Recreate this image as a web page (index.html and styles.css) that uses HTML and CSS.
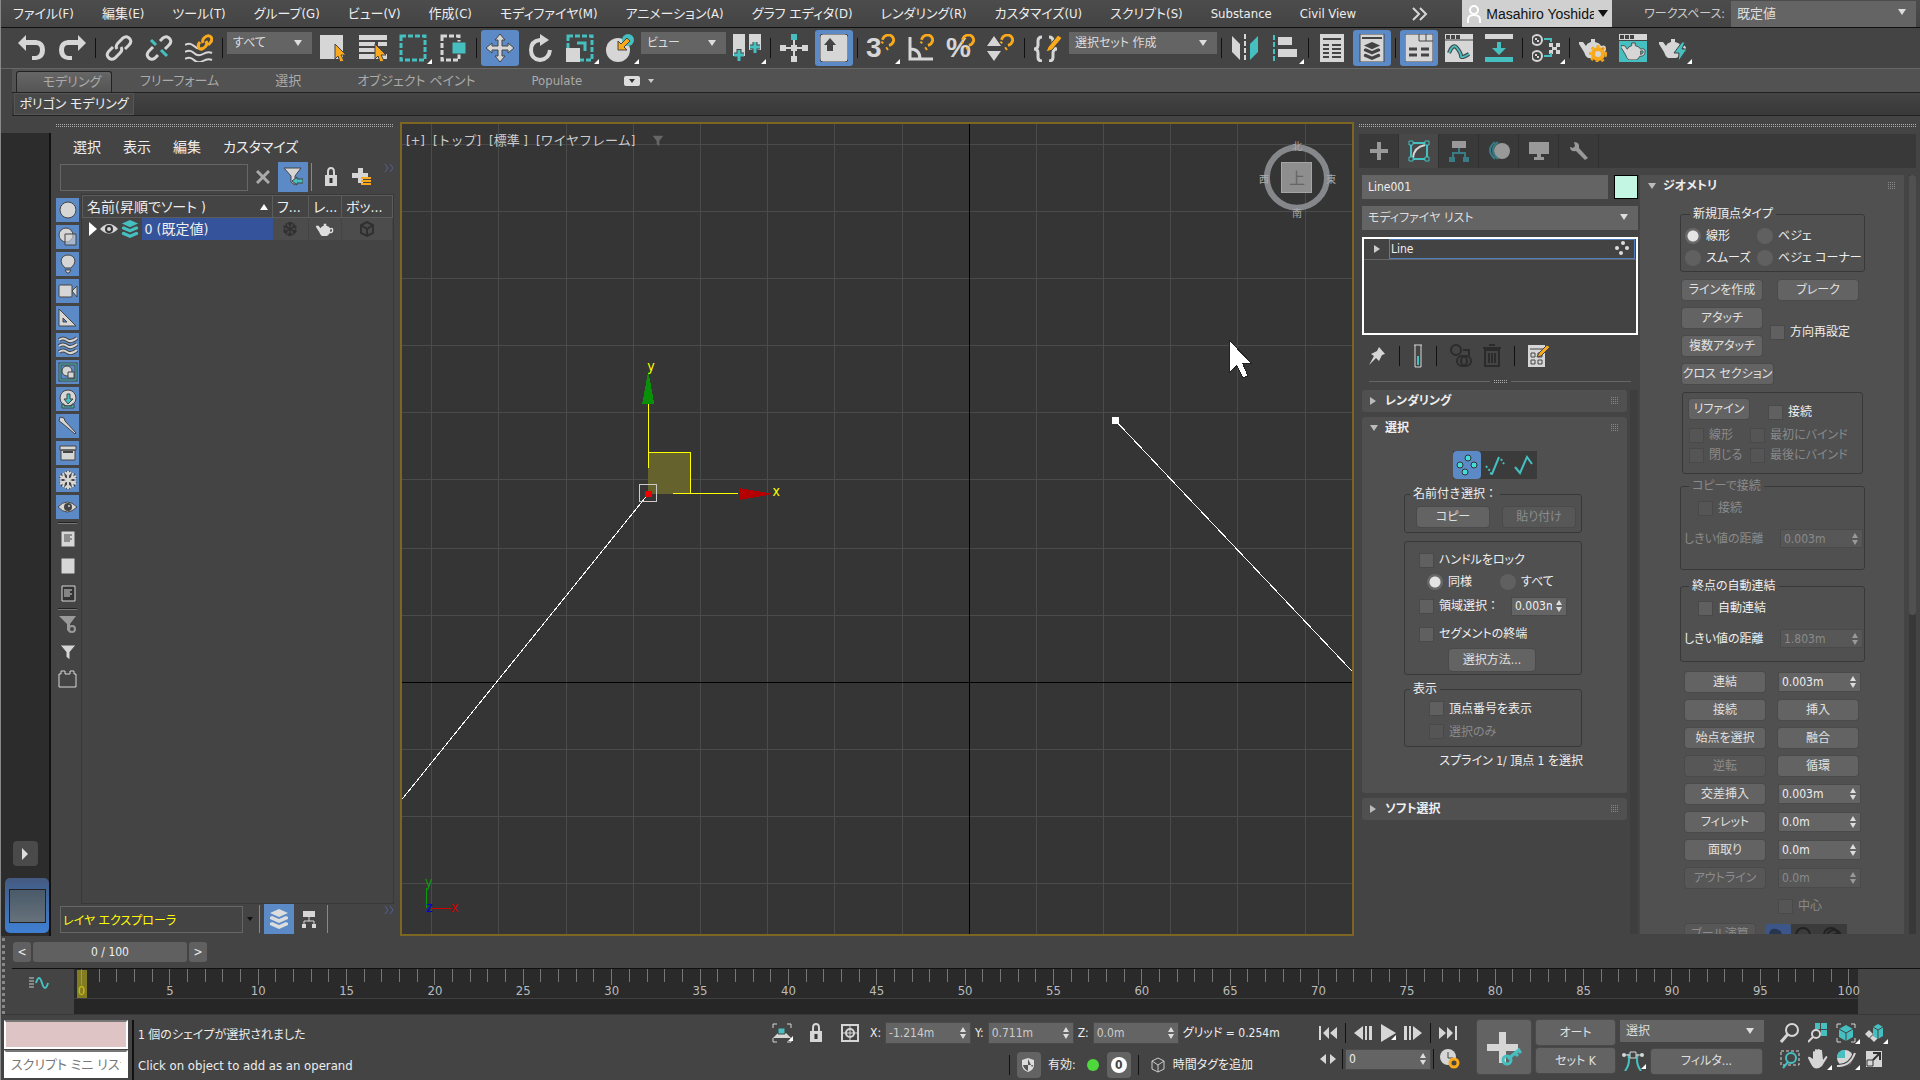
FILE: index.html
```html
<!DOCTYPE html>
<html lang="ja">
<head>
	<meta charset="utf-8">
	<title>3ds Max</title>
	<link rel="stylesheet" href="styles.css">
</head>
<body>

	<svg class="defs" width="0" height="0">
		<symbol id="teapot" viewBox="0 0 28 20">
			<path d="M12 1h4v3q5 1 6 4 5-2 5 3t-6 5q-1 3-4 4h-8Q6 18 5 14L0 6V4h4l3 4q1-3 5-4zM22 10v4q3-1 3-3t-3-1z"/>
		</symbol>
		<symbol id="stack" viewBox="0 0 20 20">
			<path d="M10 0l9 4-9 4-9-4zM1 8l2-1 7 3 7-3 2 1v2l-9 4-9-4zM1 14l2-1 7 3 7-3 2 1v2l-9 4-9-4z"/>
		</symbol>
		<symbol id="flake" viewBox="0 0 20 20">
			<path d="M10 1v18M2 6l16 8M2 14l16-8M7 2l3 3 3-3M7 18l3-3 3 3M2 9l4-2-1-4M18 9l-4-2 1-4M2 11l4 2-1 4M18 11l-4 2 1 4" fill="none"/>
		</symbol>
		<symbol id="cube" viewBox="0 0 16 16">
			<path d="M8 1l6 3v8l-6 3-6-3V4zM2 4l6 4 6-4M8 8v7" fill="none"/>
		</symbol>
		<symbol id="magnet" viewBox="0 0 16 18">
			<path d="M2 6q2-5 7-5 5 1 5 6-1 4-5 5" fill="none" stroke="#f9a91a" stroke-width="3"/>
			<path d="M6 14l2 3M1 8l2 2" stroke="#f9a91a" stroke-width="2"/>
		</symbol>
		<symbol id="spin" viewBox="0 0 8 14">
			<path d="M4 1l3 5H1zM4 13l3-5H1z"/>
		</symbol>
		<symbol id="grip" viewBox="0 0 8 8">
			<path d="M0 .5h8M0 2.500h8M0 4.500h8M0 6.500h8" stroke="#888" stroke-dasharray="1 1"/>
		</symbol>
		<symbol id="funnel" viewBox="0 0 18 18">
			<path d="M1 1h16l-6 8v8l-4-3V9z"/>
		</symbol>
		<symbol id="link" viewBox="0 0 28 28">
			<g fill="none" stroke="#d6d6d6" stroke-width="3">
				<path d="M12 15q-2-3 1-6l5-5q4-3 7 1 2 3-1 6l-4 4"/>
				<path d="M16 13q2 3-1 6l-5 5q-4 3-7-1-2-3 1-6l4-4"/>
			</g>
		</symbol>
	</svg>

	<nav class="menubar">
		<a href="#">ファイル(F)</a>
		<a href="#">編集(E)</a>
		<a href="#">ツール(T)</a>
		<a href="#">グループ(G)</a>
		<a href="#">ビュー(V)</a>
		<a href="#">作成(C)</a>
		<a href="#">モディファイヤ(M)</a>
		<a href="#">アニメーション(A)</a>
		<a href="#">グラフ エディタ(D)</a>
		<a href="#">レンダリング(R)</a>
		<a href="#">カスタマイズ(U)</a>
		<a href="#">スクリプト(S)</a>
		<a href="#">Substance</a>
		<a href="#">Civil View</a>
		<button type="button" class="more" aria-label="more"><svg width="16" height="14" viewBox="0 0 16 14"><path d="M1 1l6 6-6 6M8 1l6 6-6 6" fill="none" stroke="#d6d6d6" stroke-width="2"/></svg></button>
		<button type="button" class="user">
			<svg width="16" height="18" viewBox="0 0 16 18"><g fill="none" stroke="#fff" stroke-width="2"><circle cx="8" cy="5" r="4"/><path d="M2 18v-3q0-5 6-5t6 5v3"/></g></svg>
			<span class="name">Masahiro Yoshida</span>
			<span class="tri"></span>
		</button>
		<label for="workspace">ワークスペース:</label>
		<span class="drop"><select id="workspace"><option>既定値</option></select></span>
	</nav>

	<div class="toolbar">
		<button type="button" class="tool" aria-label="undo"><svg viewBox="0 0 28 28"><path d="M0 9l8-8v5h10q9 1 9 10t-9 10h-4v-4h4q4-1 4-6t-4-5H8v6z" fill="#d6d6d6"/></svg></button>
		<button type="button" class="tool" aria-label="redo"><svg viewBox="0 0 28 28"><path d="M28 9l-8-8v5H10Q1 7 1 16t9 10h4v-4h-4q-4-1-4-6t4-5h10v6z" fill="#d6d6d6"/></svg></button>
		<span class="sep"></span>
		<button type="button" class="tool" aria-label="link"><svg><use href="#link"/></svg></button>
		<button type="button" class="tool" aria-label="unlink"><svg viewBox="0 0 28 28"><g fill="none" stroke="#d6d6d6" stroke-width="3"><path d="M15 7l3-3q4-3 7 1 2 3-1 6l-4 4M13 21l-3 3q-4 3-7-1-2-3 1-6l4-4"/></g><path d="M6 6l5 5M16 16l6 6" stroke="#45bfc0" stroke-width="3"/></svg></button>
		<button type="button" class="tool" aria-label="bind"><svg viewBox="0 0 28 28"><path d="M0 11q5-3 9 1t9 2M0 18q5-3 9 1t9 1 9-1M0 25q5-3 9 1t9 1 9-1" fill="none" stroke="#d6d6d6" stroke-width="2"/><g fill="none" stroke="#f9a91a" stroke-width="3"><path d="M18 9q-1-3 1-5 4-4 7-1 2 3-1 6l-2 2"/><path d="M21 7q2 3-1 6-4 4-6 1-2-3 1-6"/></g></svg></button>
		<span class="sep"></span>
		<span class="drop w85"><select aria-label="filter"><option>すべて</option></select></span>
		<button type="button" class="tool" aria-label="select object"><svg viewBox="0 0 28 28"><path d="M1 1h23v24H1z" fill="#d6d6d6"/><path d="M16 10l11 11h-5l3 6-4 1-2-6-3 3z" fill="#f9a91a" stroke="#444"/></svg></button>
		<button type="button" class="tool" aria-label="select by name"><svg viewBox="0 0 28 28"><path d="M0 1h28v5H0zM0 8h16v4H0zM0 14h16v4H0zM0 20h28v5H0zM19 8h9v4h-9z" fill="#d6d6d6"/><path d="M16 10l11 11h-5l3 6-4 1-2-6-3 3z" fill="#f9a91a" stroke="#444"/></svg></button>
		<button type="button" class="tool fly" aria-label="region"><svg viewBox="0 0 28 28"><path d="M2 2h24v24H2z" fill="none" stroke="#45bfc0" stroke-width="3" stroke-dasharray="5 2"/></svg></button>
		<button type="button" class="tool" aria-label="crossing"><svg viewBox="0 0 28 28"><path d="M3 2h17v24H3z" fill="none" stroke="#d6d6d6" stroke-width="3" stroke-dasharray="5 2"/><path d="M13 8h14v12H13z" fill="#45bfc0" stroke="#444"/></svg></button>
		<span class="sep"></span>
		<button type="button" class="tool on" aria-label="move"><svg viewBox="0 0 28 28"><path d="M14 0l5 6h-3v6h6V9l6 5-6 5v-3h-6v6h3l-5 6-5-6h3v-6H6v3l-6-5 6-5v3h6V6H9z" fill="#d6d6d6" stroke="#444"/></svg></button>
		<button type="button" class="tool" aria-label="rotate"><svg viewBox="0 0 28 28"><path d="M16 6H14q-9 1-9 10t9 10q9-1 10-10" fill="none" stroke="#d6d6d6" stroke-width="4"/><path d="M14 0l9 6-9 6z" fill="#d6d6d6"/></svg></button>
		<button type="button" class="tool fly" aria-label="scale"><svg viewBox="0 0 28 28"><path d="M2 2h24v24H2z" fill="none" stroke="#45bfc0" stroke-width="3" stroke-dasharray="5 2"/><path d="M0 14h14v14H0z" fill="#d6d6d6"/><path d="M11 9h8v8" fill="none" stroke="#45bfc0" stroke-width="3"/></svg></button>
		<button type="button" class="tool fly" aria-label="place"><svg viewBox="0 0 28 28"><circle cx="12" cy="16" r="12" fill="#d6d6d6"/><circle cx="22" cy="6" r="6" fill="#45bfc0"/><path d="M21 4l3 3-6 6 3 3h-9V7l3 3z" fill="#f9a91a" stroke="#444"/></svg></button>
		<span class="drop w85"><select aria-label="coordinate system"><option>ビュー</option></select></span>
		<button type="button" class="tool fly" aria-label="pivot"><svg viewBox="0 0 28 28"><path d="M0 0h12v22H0zM16 0h12v16H16z" fill="#d6d6d6"/><path d="M6 15v12M1 21h10M22 8v11M17 13h10" stroke="#444" stroke-width="5"/><path d="M6 16v11M1 21h10M22 8v11M17 13h10" stroke="#45bfc0" stroke-width="3"/></svg></button>
		<span class="sep"></span>
		<button type="button" class="tool" aria-label="manipulate"><svg viewBox="0 0 28 28"><path d="M14 6v16M4 14h20" stroke="#d6d6d6" stroke-width="2"/><path d="M11 0h6v6h-6z" fill="#45bfc0"/><path d="M11 22h6v6h-6zM0 11h6v6H0zM22 11h6v6h-6zM11 11h6v6h-6z" fill="#d6d6d6"/></svg></button>
		<button type="button" class="tool on" aria-label="keyboard override"><svg viewBox="0 0 28 28"><rect width="28" height="28" rx="3" fill="#d6d6d6" stroke="#444"/><path d="M10 4l6 7h-3v6H7v-6H4z" fill="#444"/></svg></button>
		<span class="sep"></span>
		<button type="button" class="tool fly big" aria-label="snap">3<svg class="mag"><use href="#magnet"/></svg></button>
		<button type="button" class="tool" aria-label="angle snap"><svg viewBox="0 0 28 28"><path d="M3 3v22h23M3 15q10 0 10 10" fill="none" stroke="#d6d6d6" stroke-width="3"/><use href="#magnet" x="12" y="0" width="16" height="17"/></svg></button>
		<button type="button" class="tool big" aria-label="percent snap">%<svg class="mag"><use href="#magnet"/></svg></button>
		<button type="button" class="tool" aria-label="spinner snap"><svg viewBox="0 0 28 28"><path d="M7 2l7 10H0zM7 27l7-10H0z" fill="#d6d6d6"/><use href="#magnet" x="12" y="0" width="16" height="17"/></svg></button>
		<span class="sep"></span>
		<button type="button" class="tool" aria-label="edit named sets"><svg viewBox="0 0 28 28"><path d="M8 3Q4 3 4 7v4q0 4-4 4 4 0 4 4v4q0 4 4 4M15 3q4 0 4 4v4q0 4 4 4-4 0-4 4v4q0 4-4 4" fill="none" stroke="#d6d6d6" stroke-width="3"/><path d="M12 18l2-5L24 1l4 3-10 12z" fill="#f9a91a" stroke="#444"/></svg></button>
		<span class="drop w148"><select aria-label="selection set"><option>選択セット 作成</option></select></span>
		<span class="sep"></span>
		<button type="button" class="tool" aria-label="mirror"><svg viewBox="0 0 28 28"><path d="M1 2l8 8v16l-8-8z" fill="#d6d6d6"/><path d="M27 2l-8 8v16l8-8z" fill="#45bfc0"/><path d="M14 0v28" stroke="#d6d6d6" stroke-width="2" stroke-dasharray="5 2"/></svg></button>
		<button type="button" class="tool fly" aria-label="align"><svg viewBox="0 0 28 28"><path d="M3 1v26" stroke="#45bfc0" stroke-width="2" stroke-dasharray="5 2"/><path d="M7 3h14v8H7zM7 15h19v8H7z" fill="#d6d6d6"/></svg></button>
		<span class="sep"></span>
		<button type="button" class="tool" aria-label="scene explorer"><svg viewBox="0 0 28 28"><path d="M2 0h24v28H2z" fill="#d6d6d6"/><path d="M5 5h18M5 11h6M14 11h9M5 15h6M14 15h9M5 19h6M14 19h9M5 23h6M14 23h9" stroke="#444" stroke-width="2"/></svg></button>
		<button type="button" class="tool on" aria-label="layer explorer"><svg viewBox="0 0 28 28"><path d="M2 0h24v28H2z" fill="#d6d6d6" stroke="#444"/><path d="M4 4h20" stroke="#444" stroke-width="2"/><use href="#stack" x="5" y="8" width="18" height="18" fill="#444"/></svg></button>
		<span class="sep"></span>
		<button type="button" class="tool on" aria-label="ribbon"><svg viewBox="0 0 28 28"><path d="M0 0h28v28H0z" fill="#d6d6d6" stroke="#444"/><path d="M14 0v7h14M21 0v7" fill="none" stroke="#444"/><path d="M4 15h8M16 15h8M4 21h8M16 21h8" stroke="#444" stroke-width="3"/></svg></button>
		<button type="button" class="tool" aria-label="curve editor"><svg viewBox="0 0 28 28"><path d="M0 0h28v28H0z" fill="#d6d6d6"/><path d="M1 3h4M6 3h4M11 3h4" stroke="#444" stroke-width="4"/><path d="M0 6h28" stroke="#444"/><path d="M4 19q4-10 8-5t4 8 8-2" fill="none" stroke="#444" stroke-width="4"/><path d="M4 19q4-10 8-5t4 8 8-2" fill="none" stroke="#45bfc0" stroke-width="2"/></svg></button>
		<button type="button" class="tool" aria-label="schematic"><svg viewBox="0 0 28 28"><path d="M0 0h28v5H0z" fill="#d6d6d6"/><path d="M0 23h28v5H0zM12 8h4v6h5l-7 7-7-7h5z" fill="#45bfc0"/></svg></button>
		<span class="sep"></span>
		<button type="button" class="tool fly" aria-label="material editor"><svg viewBox="0 0 28 28"><g fill="#444" stroke="#d6d6d6" stroke-width="2"><circle cx="5" cy="6" r="5"/><circle cx="5" cy="22" r="5"/></g><path d="M3 4h2v2h2v2H5V6H3zM3 20h2v2h2v2H5v-2H3zM17 9h4v4h3V9h4v4h-3v3h3v4h-4v-4h-3v4h-4v-4h3v-3h-3z" fill="#d6d6d6"/><path d="M12 5h7v3M12 22h7v-3" fill="none" stroke="#45bfc0" stroke-width="2"/></svg></button>
		<span class="sep"></span>
		<button type="button" class="tool" aria-label="render setup"><svg viewBox="0 0 28 28"><use href="#teapot" y="4" width="28" height="20" fill="#d6d6d6"/><circle cx="19" cy="20" r="5" fill="#d6d6d6" stroke="#f9a91a" stroke-width="4"/><circle cx="19" cy="20" r="8" fill="none" stroke="#f9a91a" stroke-width="2" stroke-dasharray="3 3"/></svg></button>
		<button type="button" class="tool" aria-label="rendered frame"><svg viewBox="0 0 28 28"><path d="M0 0h28v6H0z" fill="#d6d6d6"/><path d="M1 3h4M6 3h4M11 3h4" stroke="#444" stroke-width="4"/><path d="M0 7h28v21H0z" fill="#45bfc0"/><use href="#teapot" x="2" y="8" width="25" height="18" fill="#d6d6d6" stroke="#444"/></svg></button>
		<button type="button" class="tool fly" aria-label="render"><svg viewBox="0 0 28 28"><use href="#teapot" y="4" width="28" height="20" fill="#d6d6d6"/><path d="M23 8l-8 11h5l-1 9 9-13h-5l3-7z" fill="#45bfc0" stroke="#444"/></svg></button>
	</div>

	<div class="ribbon">
		<div class="tabs">
			<button type="button" class="current">モデリング</button>
			<button type="button">フリーフォーム</button>
			<button type="button">選択</button>
			<button type="button">オブジェクト ペイント</button>
			<button type="button">Populate</button>
			<button type="button" class="state" aria-label="minimize"><svg width="32" height="10" viewBox="0 0 32 10"><rect width="16" height="10" rx="2" fill="#ddd"/><path d="M5 3h6l-3 4z" fill="#333"/><path d="M24 3h6l-3 4z" fill="#ccc"/></svg></button>
		</div>
		<div class="sub"><button type="button">ポリゴン モデリング</button></div>
	</div>

	<main>
		<aside class="strip">
			<button type="button" class="play" aria-label="play"><svg width="8" height="12" viewBox="0 0 8 12"><path d="M1 0l6 6-6 6z" fill="#ddd"/></svg></button>
			<button type="button" class="layout" aria-label="layout"><span></span></button>
		</aside>

		<section class="explorer">
			<div class="handle"></div>
			<nav>
				<a href="#">選択</a>
				<a href="#">表示</a>
				<a href="#">編集</a>
				<a href="#">カスタマイズ</a>
			</nav>
			<div class="search">
				<input type="text" aria-label="search">
				<button type="button" class="clear" aria-label="clear"><svg width="14" height="14" viewBox="0 0 14 14"><path d="M1 1l12 12M13 1L1 13" stroke="#aaa" stroke-width="3"/></svg></button>
				<button type="button" class="sq on" aria-label="filter"><svg width="20" height="20" viewBox="0 0 20 20"><path d="M1 1h17l-6 8v9l-4-3V9z" fill="#d6d6d6" stroke="#444"/><path d="M9 14l5-4v2h6v4h-6v2z" fill="#45bfc0" stroke="#444"/></svg></button>
				<span class="bar"></span>
				<button type="button" class="sq" aria-label="lock"><svg width="14" height="20" viewBox="0 0 14 20"><path d="M4 9V5q0-4 3-4t3 4v4" fill="none" stroke="#d6d6d6" stroke-width="2"/><path d="M1 8h12v11H1z" fill="#d6d6d6"/><path d="M7 11v5" stroke="#333" stroke-width="3"/></svg></button>
				<button type="button" class="sq" aria-label="add layer"><svg width="20" height="20" viewBox="0 0 20 20"><path d="M7 1h5v5h5v5h-5v5H7v-5H1V6h6z" fill="#d6d6d6"/><path d="M10 11h10M10 14h10M10 17h10" stroke="#f9a91a" stroke-width="2"/></svg></button>
				<span class="chev"><svg width="10" height="8" viewBox="0 0 10 8"><path d="M1 0l3 4-3 4M6 0l3 4-3 4" fill="none" stroke="#55609c"/></svg></span>
			</div>
			<div class="scene">
				<div class="kinds">
					<button type="button" class="on" aria-label="geometry"><svg><circle cx="10" cy="10" r="8"/></svg></button>
					<button type="button" class="on" aria-label="shapes"><svg><circle cx="8" cy="8" r="7"/><path d="M7 7h11v11H7z" fill-opacity=".6"/></svg></button>
					<button type="button" class="on" aria-label="lights"><svg><path d="M7 14Q3 10 3 7q1-6 7-6t7 6q0 3-4 7zM7 16h6l-2 3H9z"/></svg></button>
					<button type="button" class="on" aria-label="cameras"><svg><rect y="4" x="1" width="13" height="12" rx="1"/><path d="M14 10l5-5v11z"/></svg></button>
					<button type="button" class="on" aria-label="helpers"><svg><path d="M1 1l17 17H1zM5 10v4h4z"/></svg></button>
					<button type="button" class="on" aria-label="space warps"><svg><path d="M1 5q4-3 8 0t10-2M1 11q4-3 8 0t10-2M1 17q4-3 8 0t10-2" fill="none" stroke="#444" stroke-width="4"/><path d="M1 5q4-3 8 0t10-2M1 11q4-3 8 0t10-2M1 17q4-3 8 0t10-2" fill="none" stroke="#d6d6d6" stroke-width="2"/></svg></button>
					<button type="button" class="on" aria-label="groups"><svg><path d="M2 2h16v16H2z" fill="#5b8ac6" stroke="#444" stroke-width="3"/><path d="M2 2h16v16H2z" fill="none" stroke="#45bfc0"/><circle cx="9" cy="9" r="5"/><path d="M10 10h6v6h-6z"/></svg></button>
					<button type="button" class="on" aria-label="references"><svg><circle cx="10" cy="9" r="8"/><path d="M9 5h3v5h3l-5 5-4-5h3zM4 15h2v2h8v-2h2v4H4z" fill="#45bfc0"/></svg></button>
					<button type="button" class="on" aria-label="bones"><svg><path d="M2 1l4 1 1 3 11 12-1 1L4 7 1 5z"/></svg></button>
					<button type="button" class="on" aria-label="containers"><svg><path d="M2 3h16v4H2zM3 7h14v10H3z"/><path d="M5 9h10" stroke-width="2"/></svg></button>
					<button type="button" class="on" aria-label="frozen"><svg><use href="#flake" stroke="#444" stroke-width="4"/><use href="#flake" stroke="#d6d6d6" stroke-width="2"/></svg></button>
					<button type="button" class="on" aria-label="hidden"><svg><path d="M0 10q9-10 19 0-10 10-19 0z"/><circle cx="10" cy="10" r="3" fill="#444" stroke-width="2"/><circle cx="11" cy="9" r="1" stroke="none"/></svg></button>
					<hr>
					<button type="button" aria-label="all"><svg><path d="M3 2h14v16H3z"/><path d="M6 6h8M6 8h6M6 10h8M6 12h6"/></svg></button>
					<button type="button" aria-label="none"><svg><path d="M3 2h14v16H3z"/></svg></button>
					<button type="button" aria-label="invert"><svg><path d="M4 3h13v15H4z" fill="#333" stroke="#d6d6d6"/><path d="M6 7h8M6 9h6M6 11h8M6 13h6" stroke="#d6d6d6"/></svg></button>
					<hr>
					<button type="button" aria-label="filter settings"><svg><path d="M1 1h17l-6 8v9l-3-3V9z" fill="#999" stroke="none"/><circle cx="14" cy="14" r="3" fill="#444" stroke="#999" stroke-width="2"/></svg></button>
					<button type="button" aria-label="display filter"><svg><path d="M2 3h16l-6 7v8l-4-3v-5z"/></svg></button>
					<button type="button" aria-label="custom filter"><svg><path d="M1 5h2V2h4v3h5V2h4v3h2v13H1z" fill="none" stroke="#d6d6d6"/></svg></button>
				</div>
				<div class="list">
					<table>
						<thead>
							<tr><th class="sort">名前(昇順でソート )</th><th class="c1">フ...</th><th class="c2">レ...</th><th class="c3">ボッ...</th></tr>
						</thead>
						<tbody>
							<tr>
								<td>
									<div class="node">
										<svg width="8" height="14" viewBox="0 0 8 14"><path d="M0 0l8 7-8 7z" fill="#fff"/></svg>
										<svg width="18" height="12" viewBox="0 0 18 12"><path d="M0 6q9-10 18 0-9 9-18 0z" fill="#d6d6d6"/><circle cx="9" cy="6" r="3" fill="#d6d6d6" stroke="#333" stroke-width="2"/></svg>
										<svg width="18" height="18"><use href="#stack" fill="#45bfc0"/></svg>
										<span>0 (既定値)</span>
									</div>
								</td>
								<td class="cell"><svg width="16" height="16"><use href="#flake" stroke="#303030" stroke-width="2"/></svg></td>
								<td class="cell"><svg width="18" height="13"><use href="#teapot" fill="#ddd"/></svg></td>
								<td class="cell"><svg width="16" height="16"><use href="#cube" stroke="#303030" stroke-width="2"/></svg></td>
							</tr>
						</tbody>
					</table>
				</div>
			</div>
			<div class="foot">
				<input type="text" class="title" value="レイヤ エクスプローラ" aria-label="explorer name">
				<span class="tri small"></span>
				<span class="bar"></span>
				<button type="button" class="sq on" aria-label="layers"><svg width="20" height="22"><use href="#stack" fill="#ddd"/></svg></button>
				<button type="button" class="sq" aria-label="hierarchy"><svg width="16" height="18" viewBox="0 0 16 18"><path d="M2 1h12v6H2z" fill="#d6d6d6"/><path d="M8 7v4M3 14v-3h10v3" fill="none" stroke="#d6d6d6"/><path d="M1 14h4v4H1zM11 14h4v4h-4z" fill="#d6d6d6"/></svg></button>
				<span class="bar"></span>
				<span class="chev"><svg width="10" height="8" viewBox="0 0 10 8"><path d="M1 0l3 4-3 4M6 0l3 4-3 4" fill="none" stroke="#55609c"/></svg></span>
			</div>
		</section>

		<section class="viewport">
			<svg class="canvas" viewBox="403 124 949 810" preserveAspectRatio="xMidYMid slice">
				<path class="grid" d="M432 124v810M499 124v810M567 124v810M634 124v810M701 124v810M768 124v810M835 124v810M903 124v810M1037 124v810M1104 124v810M1171 124v810M1238 124v810M1306 124v810M403 145h949M403 212h949M403 279h949M403 346h949M403 413h949M403 480h949M403 548h949M403 615h949M403 749h949M403 816h949M403 883h949"/>
				<path class="origin" d="M970 124v810M403 682h949"/>
				<path class="spline" d="M403 799L649 494M1115 420l237 251"/>
				<path d="M1112 417h7v7h-7z" fill="#fff"/>

				<path d="M649 453h42v41h-42z" fill="#65622d"/>
				<path class="axis" d="M649 468v-64M649 453h42v41M674 494h65"/>
				<path d="M649 371l6 33h-12z" fill="#089008"/>
				<path d="M774 494l-34-6v12z" fill="#b40000"/>
				<path d="M646 491h7v6h-7z" fill="#f00000"/>
				<path d="M640 485h17v17h-17z" fill="none" stroke="#ccc"/>
				<text x="648" y="371" fill="#ff0">y</text>
				<text x="773" y="496" fill="#ff0">x</text>

				<path d="M427 908v-20" stroke="#0a9a0a"/>
				<path d="M432 908h20" stroke="#d00000"/>
				<text x="426" y="887" fill="#0a9a0a">y</text>
				<text x="427" y="912" fill="#0000d0">z</text>
				<text x="452" y="912" fill="#d00000">x</text>

				<circle cx="1297" cy="178" r="30" fill="none" stroke="#85878a" stroke-width="6"/>
				<path d="M1282 163h30v30h-30z" fill="#8e8e8e" stroke="#a5a5a5"/>
				<g class="compass">
					<text x="1297" y="150">北</text>
					<text x="1297" y="217">南</text>
					<text x="1264" y="183">西</text>
					<text x="1331" y="183">東</text>
					<text x="1297" y="184" class="top">上</text>
				</g>
				<path d="M1230 341v31l7-6 6 12 5-2-5-12h9z" fill="#fff" stroke="#222"/>
			</svg>
			<div class="labels">
				<span>[+]</span>
				<span>[トップ]</span>
				<span>[標準 ]</span>
				<span>[ワイヤフレーム]</span>
				<svg width="14" height="12"><use href="#funnel" fill="#666"/></svg>
			</div>
		</section>

		<section class="command">
			<div class="handle"></div>
			<div class="cmdtabs">
				<button type="button" aria-label="create"><svg width="20" height="20" viewBox="0 0 20 20"><path d="M10 1v18M1 10h18" stroke="#999" stroke-width="4"/></svg></button>
				<button type="button" class="current" aria-label="modify"><svg width="22" height="22" viewBox="0 0 22 22"><path d="M3 3h16v16H3z" fill="none" stroke="#45bfc0" stroke-width="2"/><path d="M5 18q1-11 12-13" fill="none" stroke="#d6d6d6" stroke-width="2"/><path d="M1 1h4v4H1zM17 1h4v4h-4zM1 17h4v4H1zM17 17h4v4h-4z" fill="#444" stroke="#45bfc0"/></svg></button>
				<button type="button" aria-label="hierarchy"><svg width="20" height="22" viewBox="0 0 20 22"><path d="M3 1h14v7H3z" fill="#999"/><path d="M10 8v4M4 17v-4h12v4" fill="none" stroke="#3a7c86" stroke-width="2"/><path d="M0 17h6v5H0zM14 17h6v5h-6z" fill="#3a7c86"/></svg></button>
				<button type="button" aria-label="motion"><svg width="24" height="20" viewBox="0 0 24 20"><circle cx="15" cy="10" r="8" fill="#999"/><path d="M8 1Q-2 9 8 18M11 1Q1 9 11 18" fill="none" stroke="#3a7c86" stroke-width="2"/></svg></button>
				<button type="button" aria-label="display"><svg width="20" height="18" viewBox="0 0 20 18"><path d="M0 0h20v12H0zM8 12h4v3h3v3H5v-3h3z" fill="#999"/></svg></button>
				<button type="button" aria-label="utilities"><svg width="20" height="20" viewBox="0 0 20 20"><path d="M5 1l1 4-2 2-3-1Q1 11 7 10l9 9 3-2L10 7Q11 1 5 1z" fill="#999"/></svg></button>
			</div>
			<div class="columns">
				<div class="left">
					<div class="namerow">
						<input type="text" value="Line001" aria-label="object name">
						<button type="button" class="swatch" aria-label="color"></button>
					</div>
					<span class="drop tall"><select aria-label="modifier list"><option>モディファイヤ リスト</option></select></span>
					<div class="stack">
						<div class="mod">
							<svg width="6" height="8" viewBox="0 0 6 8"><path d="M0 0l6 4-6 4z" fill="#ccc"/></svg>
							<div>Line <svg width="14" height="14" viewBox="0 0 14 14"><g fill="#ddd"><circle cx="8" cy="2" r="2"/><circle cx="2" cy="7" r="2"/><circle cx="12" cy="7" r="2"/><circle cx="6" cy="12" r="2"/></g></svg></div>
						</div>
					</div>
					<div class="stacktools">
						<button type="button" aria-label="pin"><svg width="18" height="20" viewBox="0 0 18 20"><path d="M11 1l6 7-3 1-3 6-3-3-7 7 5-9-3-2 6-3z" fill="#d6d6d6"/></svg></button>
						<span class="cut"></span>
						<button type="button" aria-label="show result"><svg width="10" height="24" viewBox="0 0 10 24"><path d="M1 1h8M2 1v22h6V1" fill="none" stroke="#d6d6d6"/><path d="M4 12h2v9H4z" fill="#45bfc0"/></svg></button>
						<span class="cut"></span>
						<button type="button" aria-label="make unique"><svg width="24" height="24" viewBox="0 0 24 24"><g fill="none" stroke="#2b2b2b" stroke-width="2"><circle cx="6" cy="6" r="5"/><circle cx="12" cy="17" r="5"/><circle cx="16" cy="17" r="5"/><path d="M13 6h6v6"/></g></svg></button>
						<button type="button" aria-label="remove"><svg width="18" height="24" viewBox="0 0 18 24"><path d="M2 6h14v16H2zM0 4h18M6 1h6M6 9v10M9 9v10M12 9v10" fill="none" stroke="#2b2b2b" stroke-width="2"/></svg></button>
						<span class="cut"></span>
						<button type="button" aria-label="configure"><svg width="22" height="24" viewBox="0 0 22 24"><path d="M0 1h17v22H0z" fill="#d6d6d6"/><path d="M3 9h4v4H3zM10 9h4v4h-4zM3 16h4v4H3zM10 16h4v4h-4zM2 5h13" fill="none" stroke="#444"/><path d="M9 13l2-4 8-8 3 2-9 9z" fill="#f9a91a" stroke="#444"/></svg></button>
					</div>
					<div class="splitter"><i class="handle"></i></div>

					<div class="rollouts">
						<div class="rollout"><button type="button" class="head">レンダリング<svg><use href="#grip"/></svg></button></div>
						<div class="rollout open">
							<button type="button" class="head">選択<svg><use href="#grip"/></svg></button>
							<div class="sub-levels">
								<button type="button" class="on" aria-label="vertex"><svg width="22" height="22" viewBox="0 0 22 22"><g fill="#45dbd9" stroke="#333"><circle cx="12" cy="4" r="3"/><circle cx="4" cy="11" r="3"/><circle cx="18" cy="11" r="3"/><circle cx="9" cy="18" r="3"/></g></svg></button>
								<button type="button" aria-label="segment"><svg width="20" height="20" viewBox="0 0 20 20"><path d="M5 18l2 1 7-17" fill="none" stroke="#45bfc0" stroke-width="2"/><path d="M1 11l4 5M16 4l3 5" stroke="#45bfc0" stroke-width="2" stroke-dasharray="2 2"/></svg></button>
								<button type="button" aria-label="spline"><svg width="20" height="20" viewBox="0 0 20 20"><path d="M2 12l5 6 7-16 5 7" fill="none" stroke="#45bfc0" stroke-width="2"/></svg></button>
							</div>
							<fieldset>
								<legend class="full">名前付き選択：</legend>
								<div class="row pair"><button type="button" class="btn">コピー</button><button type="button" class="btn" disabled>貼り付け</button></div>
							</fieldset>
							<fieldset class="lock">
								<div class="row"><label><input type="checkbox">ハンドルをロック</label></div>
								<div class="row in"><label><input type="radio" name="handle" checked>同様</label><label><input type="radio" name="handle">すべて</label></div>
								<div class="row gap"><label class="full"><input type="checkbox">領域選択：</label><span class="spin"><input type="text" value="0.003m" aria-label="area"><svg><use href="#spin"/></svg></span></div>
								<div class="row gap"><label><input type="checkbox">セグメントの終端</label></div>
								<div class="row mid"><button type="button" class="btn">選択方法...</button></div>
							</fieldset>
							<fieldset class="show">
								<legend>表示</legend>
								<div class="row"><label><input type="checkbox">頂点番号を表示</label></div>
								<div class="row"><label class="off"><input type="checkbox" disabled>選択のみ</label></div>
							</fieldset>
							<p>スプライン 1/ 頂点 1 を選択</p>
						</div>
						<div class="rollout"><button type="button" class="head">ソフト選択<svg><use href="#grip"/></svg></button></div>
					</div>
				</div>

				<div class="geometry">
					<button type="button" class="head open">ジオメトリ<svg><use href="#grip"/></svg></button>
					<div class="body">
						<fieldset class="types">
							<legend>新規頂点タイプ</legend>
							<label><input type="radio" name="vtype" checked>線形</label><label><input type="radio" name="vtype">ベジェ</label>
							<label><input type="radio" name="vtype">スムーズ</label><label><input type="radio" name="vtype">ベジェ コーナー</label>
						</fieldset>
						<div class="two"><button type="button" class="btn">ラインを作成</button><button type="button" class="btn">ブレーク</button></div>
						<div class="two attach">
							<div><button type="button" class="btn">アタッチ</button><button type="button" class="btn">複数アタッチ</button></div>
							<label><input type="checkbox">方向再設定</label>
						</div>
						<div><button type="button" class="btn wide">クロス セクション</button></div>
						<fieldset class="refine">
							<button type="button" class="btn">リファイン</button><label><input type="checkbox">接続</label>
							<label class="off"><input type="checkbox" disabled>線形</label><label class="off"><input type="checkbox" disabled>最初にバインド</label>
							<label class="off"><input type="checkbox" disabled>閉じる</label><label class="off"><input type="checkbox" disabled>最後にバインド</label>
						</fieldset>
						<fieldset class="weld first">
							<legend class="off">コピーで接続</legend>
							<label class="off"><input type="checkbox" disabled>接続</label>
							<div class="row"><label class="off" for="copydist">しきい値の距離</label><span class="spin off"><input id="copydist" type="text" value="0.003m" disabled><svg><use href="#spin"/></svg></span></div>
						</fieldset>
						<fieldset class="weld">
							<legend>終点の自動連結</legend>
							<label><input type="checkbox">自動連結</label>
							<div class="row"><label for="enddist">しきい値の距離</label><span class="spin off"><input id="enddist" type="text" value="1.803m" disabled><svg><use href="#spin"/></svg></span></div>
						</fieldset>
						<div class="ops">
							<button type="button" class="btn">連結</button><span class="spin"><input type="text" value="0.003m" aria-label="連結"><svg><use href="#spin"/></svg></span>
							<button type="button" class="btn">接続</button><button type="button" class="btn">挿入</button>
							<button type="button" class="btn">始点を選択</button><button type="button" class="btn">融合</button>
							<button type="button" class="btn" disabled>逆転</button><button type="button" class="btn">循環</button>
							<button type="button" class="btn">交差挿入</button><span class="spin"><input type="text" value="0.003m" aria-label="交差挿入"><svg><use href="#spin"/></svg></span>
							<button type="button" class="btn">フィレット</button><span class="spin"><input type="text" value="0.0m" aria-label="フィレット"><svg><use href="#spin"/></svg></span>
							<button type="button" class="btn">面取り</button><span class="spin"><input type="text" value="0.0m" aria-label="面取り"><svg><use href="#spin"/></svg></span>
							<button type="button" class="btn" disabled>アウトライン</button><span class="spin off"><input type="text" value="0.0m" aria-label="アウトライン" disabled><svg><use href="#spin"/></svg></span>
							<span></span><label class="off"><input type="checkbox" disabled>中心</label>
						</div>
						<div class="bool">
							<button type="button" class="btn" disabled>ブール演算</button>
							<button type="button" class="on" aria-label="union"><svg width="20" height="24" viewBox="0 0 20 24"><path d="M1 10q1-6 7-5 5 1 6 5 6 2 5 12H3z" fill="#26364f"/></svg></button>
							<button type="button" aria-label="subtract"><svg width="22" height="24" viewBox="0 0 22 24"><g fill="none" stroke="#222" stroke-width="2"><circle cx="9" cy="11" r="7"/><path d="M9 22q0-8 6-8t7 8"/></g></svg></button>
							<button type="button" aria-label="intersect"><svg width="22" height="24" viewBox="0 0 22 24"><g fill="none" stroke="#222" stroke-width="2"><circle cx="9" cy="11" r="7"/><circle cx="12" cy="13" r="7"/><circle cx="14" cy="17" r="7"/></g></svg></button>
						</div>
					</div>
				</div>
				<div class="scroll"><span></span></div>
			</div>
		</section>
	</main>

	<div class="timeline">
		<div class="slider">
			<button type="button">&lt;</button>
			<button type="button" class="frame">0 / 100</button>
			<button type="button">&gt;</button>
		</div>
		<div class="track">
			<button type="button" aria-label="mini curve editor"><svg width="20" height="14" viewBox="0 0 20 14"><path d="M0 2h5M0 5h5M0 8h5M0 11h5" stroke="#ccc"/><path d="M7 7q3-10 6 0t6 0" fill="none" stroke="#45bfc0" stroke-width="2"/></svg></button>
			<div class="ruler" id="ruler"></div>
		</div>
	</div>

	<footer>
		<div class="listener">
			<input type="text" class="pink" aria-label="macro recorder">
			<input type="text" value="スクリプト ミニ リスナー" aria-label="mini listener">
		</div>
		<div class="prompt">
			<p>1 個のシェイプが選択されました</p>
			<p class="hint">Click on object to add as an operand</p>
		</div>
		<div class="coords">
			<div class="line">
				<button type="button" class="ico fly" aria-label="isolate"><svg width="20" height="20" viewBox="0 0 20 20"><path d="M1 5V1h4M15 1h4v4M1 15v4h4M19 15v4h-4" fill="none" stroke="#d6d6d6"/><path d="M6 10h8l5 5H1z" fill="#d6d6d6"/><path d="M6 5h7v6H6z" fill="#45bfc0" stroke="#444"/></svg></button>
				<button type="button" class="ico" aria-label="lock selection"><svg width="14" height="20" viewBox="0 0 14 20"><path d="M4 9V5q0-4 3-4t3 4v4" fill="none" stroke="#d6d6d6" stroke-width="2"/><path d="M1 8h12v11H1z" fill="#d6d6d6"/><path d="M7 11v5" stroke="#333" stroke-width="3"/></svg></button>
				<button type="button" class="ico" aria-label="absolute mode"><svg width="18" height="18" viewBox="0 0 18 18"><path d="M1 1h16v16H1z" fill="none" stroke="#d6d6d6" stroke-width="2"/><circle cx="9" cy="9" r="4" fill="none" stroke="#d6d6d6" stroke-width="2"/><path d="M9 2v14M2 9h14" stroke="#d6d6d6"/></svg></button>
				<label for="px">X:</label><span class="spin"><input id="px" type="text" value="-1.214m"><svg><use href="#spin"/></svg></span>
				<label for="py">Y:</label><span class="spin"><input id="py" type="text" value="0.711m"><svg><use href="#spin"/></svg></span>
				<label for="pz">Z:</label><span class="spin"><input id="pz" type="text" value="0.0m"><svg><use href="#spin"/></svg></span>
				<span class="gridsize">グリッド = 0.254m</span>
			</div>
			<div class="line end">
				<span class="cut"></span>
				<button type="button" class="chip" aria-label="shield"><svg width="14" height="16" viewBox="0 0 14 16"><path d="M7 1l6 2v5q0 5-6 7-6-2-6-7V3z" fill="#ddd"/><path d="M7 2v6h5q0 1-1 2M7 8v6Q3 12 2 8z" fill="#555"/></svg></button>
				<span>有効:</span>
				<span class="dot"></span>
				<button type="button" class="chip"><b>0</b></button>
				<span class="cut"></span>
				<svg width="16" height="16"><use href="#cube" stroke="#ccc"/></svg>
				<button type="button" class="plain">時間タグを追加</button>
			</div>
		</div>
		<div class="transport">
			<div class="line">
				<button type="button" aria-label="start"><svg width="18" height="14" viewBox="0 0 18 14"><path d="M0 0h2v14H0zM10 1v12L4 7zM18 1v12l-7-6z"/></svg></button>
				<span class="cut"></span>
				<button type="button" aria-label="previous"><svg width="18" height="14" viewBox="0 0 18 14"><path d="M9 0v14L0 7zM11 0h2v14h-2zM15 0h3v14h-3z"/></svg></button>
				<button type="button" class="fly" aria-label="play animation"><svg width="16" height="18" viewBox="0 0 16 18"><path d="M1 0l15 9-15 9z"/></svg></button>
				<button type="button" aria-label="next"><svg width="18" height="14" viewBox="0 0 18 14"><path d="M9 0v14l9-7zM5 0h2v14H5zM0 0h3v14H0z"/></svg></button>
				<span class="cut"></span>
				<button type="button" aria-label="end"><svg width="18" height="14" viewBox="0 0 18 14"><path d="M16 0h2v14h-2zM8 1v12l6-6zM0 1v12l7-6z"/></svg></button>
			</div>
			<div class="line">
				<button type="button" aria-label="key mode"><svg width="16" height="10" viewBox="0 0 16 10"><path d="M6 0v10L0 5zM10 0v10l6-5z"/></svg></button>
				<span class="cut"></span>
				<span class="spin"><input type="text" value="0" aria-label="current frame"><svg><use href="#spin"/></svg></span>
				<span class="cut"></span>
				<button type="button" aria-label="time configuration"><svg width="20" height="20" viewBox="0 0 20 20"><circle cx="8" cy="8" r="8"/><path d="M8 3v6h5" fill="none" stroke="#444"/><circle cx="14" cy="14" r="4" fill="#444" stroke="#f9a91a" stroke-width="3"/></svg></button>
			</div>
		</div>
		<div class="keys">
			<button type="button" class="btn addkey" aria-label="set key"><svg width="36" height="36" viewBox="0 0 36 36"><path d="M13 1h7v12h12v7H20v12h-7V20H1v-7h12z" fill="#d6d6d6"/><path d="M22 28l12-10M29 22l3 3M32 19l3 3" stroke="#45bfc0" stroke-width="3"/><circle cx="21" cy="29" r="4" fill="none" stroke="#45bfc0" stroke-width="3"/></svg></button>
			<div class="col"><button type="button" class="btn">オート</button><button type="button" class="btn">セット K</button></div>
			<div class="col long">
				<span class="drop"><select aria-label="key selection"><option>選択</option></select></span>
				<div class="line"><button type="button" class="ico fly" aria-label="tangent"><svg width="22" height="20" viewBox="0 0 22 20"><path d="M3 20q6-8 3-17M19 20q-6-8-3-17" fill="none" stroke="#45bfc0" stroke-width="2"/><path d="M2 4h18" stroke="#d6d6d6"/><path d="M8 1h6v6H8z" fill="#444" stroke="#d6d6d6"/><circle cx="2" cy="4" r="2" fill="#d6d6d6"/><circle cx="20" cy="4" r="2" fill="#d6d6d6"/></svg></button><button type="button" class="btn">フィルタ...</button></div>
			</div>
		</div>
		<div class="nav">
			<button type="button" aria-label="zoom"><svg><circle cx="12" cy="7" r="6" fill="none" stroke="#d6d6d6" stroke-width="2"/><path d="M8 11l-7 8" stroke="#d6d6d6" stroke-width="3"/></svg></button>
			<button type="button" aria-label="zoom all"><svg><path d="M7 0h5v6H7zM13 0h6v6h-6zM13 7h6v6h-6z" fill="#45bfc0"/><circle cx="8" cy="11" r="4" fill="#444" stroke="#d6d6d6" stroke-width="2"/><path d="M5 14l-5 5" stroke="#d6d6d6" stroke-width="2"/></svg></button>
			<button type="button" class="fly" aria-label="zoom extents"><svg><path d="M1 5V1h4M15 1h4v4M1 15v4h4M19 15v4h-4" fill="none" stroke="#d6d6d6"/><path d="M10 2l7 4v8l-7 4-7-4V6z" fill="#45bfc0"/><path d="M3 6l7 4 7-4M10 10v8" fill="none" stroke="#444"/></svg></button>
			<button type="button" class="fly" aria-label="zoom extents all"><svg><path d="M5 7l4 4-4 4-4-4zM10 11l4 4-4 4-4-4z" fill="#d6d6d6"/><path d="M14 1l5 3v9l-5 3-5-3V4z" fill="#45bfc0"/><path d="M9 4l5 3 5-3M14 7v9" fill="none" stroke="#444"/></svg></button>
			<button type="button" aria-label="zoom region"><svg><path d="M1 2h18v14H1z" fill="none" stroke="#d6d6d6" stroke-dasharray="3 2"/><circle cx="11" cy="9" r="5" fill="#444" stroke="#45bfc0" stroke-width="2"/><path d="M8 13l-5 6" stroke="#45bfc0" stroke-width="2"/></svg></button>
			<button type="button" class="fly" aria-label="pan"><svg><path d="M5 10V3q1-2 2 0V1q1-2 2 0 2-2 3 0 2-1 2 1l1 9 3-4q2 0 1 2l-5 8q-7 6-11-2l-3-6q0-2 2-1z" fill="#d6d6d6"/></svg></button>
			<button type="button" class="fly" aria-label="orbit"><svg><circle cx="9" cy="9" r="8" fill="#d6d6d6"/><path d="M9 9V1q-8 0-8 8z" fill="#45bfc0"/><path d="M1 17Q14 18 19 4" fill="none" stroke="#444" stroke-width="4"/><path d="M1 17Q14 18 19 4" fill="none" stroke="#d6d6d6" stroke-width="2"/></svg></button>
			<button type="button" aria-label="maximize"><svg><path d="M2 2h16v16H2z" fill="#d6d6d6"/><path d="M9 4h7v7M16 4l-7 7" fill="none" stroke="#333" stroke-width="2"/><path d="M3 11h6v6H3z" fill="#d6d6d6" stroke="#333"/></svg></button>
		</div>
	</footer>

	<script>
		var ruler = document.getElementById("ruler");
		for(var i = 0; i <= 100; i++){
			var tick = document.createElement("span");
			if(i % 5 == 0){
				tick.className = "major";
				tick.textContent = i;
			}
			if(i == 0){
				tick.className = "major now";
			}
			ruler.appendChild(tick);
		}
	</script>

</body>
</html>
```
FILE: styles.css
```css
* {
	box-sizing: border-box;
}
body {
	margin: 0;
	height: 100vh;
	display: flex;
	flex-direction: column;
	overflow: hidden;
	background-color: #444;
	color: #eee;
	font-family: "DejaVu Sans Condensed", "Noto Sans CJK JP", sans-serif;
	font-size: 12px;
	line-height: 16px;
	font-feature-settings: "palt";
	border-left: 1px solid #888;
}
button, input, select {
	font: inherit;
	font-feature-settings: inherit;
	color: inherit;
	margin: 0;
	padding: 0;
	border: 0;
	background: none;
}
button {
	white-space: nowrap;
}
a {
	color: inherit;
	text-decoration: none;
	white-space: nowrap;
}
p {
	margin: 0;
}
svg {
	display: block;
	flex: none;
}
.defs {
	position: absolute;
}
.on {
	background-color: #5b8ac6;
}
.off {
	color: #8a8a8a;
}
.full {
	font-feature-settings: normal;
}
.handle {
	height: 3px;
	flex: none;
	background:
		linear-gradient(#444, #444) 0 1px / 100% 1px no-repeat,
		repeating-linear-gradient(90deg, #aaa 0, #aaa 1px, transparent 1px, transparent 2px);
}
.drop {
	position: relative;
	display: block;
	background-color: #646464;
	height: 22px;
}
.drop::after {
	content: "";
	position: absolute;
	right: 10px;
	top: 8px;
	border: 4px solid transparent;
	border-top: 6px solid #ddd;
	border-bottom: 0;
	pointer-events: none;
}
.drop select {
	appearance: none;
	width: 100%;
	height: 100%;
	padding: 0 6px;
	color: #ddd;
}
.tri {
	border: 5px solid transparent;
	border-top: 7px solid #111;
	border-bottom: 0;
}
.tri.small {
	border-width: 4px 3px 0;
}
.fly {
	position: relative;
}
.fly::after {
	content: "";
	position: absolute;
	right: 0;
	bottom: 2px;
	border-left: 5px solid transparent;
	border-bottom: 5px solid #fff;
}
.cut {
	width: 1px;
	height: 20px;
	background-color: #111;
}

/* menu */
.menubar {
	display: flex;
	align-items: center;
	height: 28px;
	gap: 24px;
	padding: 0 4px 0 12px;
	background: linear-gradient(#4c4c4c, #444);
	border-bottom: 1px solid #111;
	font-size: 13px;
}
.menubar a + a {
	margin-left: 4px;
}
.menubar .more {
	margin: 0 10px 0 auto;
}
.user {
	display: flex;
	align-items: center;
	gap: 4px;
	width: 150px;
	height: 27px;
	padding: 0 4px;
	background-color: #d0d0d0;
	color: #111;
}
.user .name {
	flex: 1;
	overflow: hidden;
	text-align: left;
	font-family: "Liberation Sans", sans-serif;
	font-size: 14px;
}
.menubar label {
	white-space: nowrap;
	font-size: 12px;
	color: #ccc;
	margin-left: 8px;
}
.menubar .drop {
	width: 185px;
	height: 26px;
	margin-left: -18px;
}

/* main toolbar */
.toolbar {
	display: flex;
	align-items: center;
	gap: 2px;
	height: 41px;
	padding-left: 12px;
	border-bottom: 1px solid #666;
}
.tool {
	display: flex;
	align-items: center;
	justify-content: center;
	width: 38px;
	height: 36px;
	flex: none;
	border-radius: 3px;
}
.tool svg {
	width: 28px;
	height: 28px;
}
.big {
	font: bold 28px "Liberation Sans", sans-serif;
	color: #d6d6d6;
	justify-content: flex-start;
	padding-left: 4px;
	position: relative;
}
.big .mag {
	position: absolute;
	width: 16px;
	height: 17px;
	left: 18px;
	top: 4px;
}
.sep {
	width: 5px;
	height: 20px;
	background: linear-gradient(#111, #111) center / 1px 100% no-repeat;
}
.toolbar .drop {
	align-self: flex-start;
	margin-top: 4px;
}
.w85 {
	width: 85px;
}
.w148 {
	width: 148px;
}

/* ribbon */
.tabs {
	display: flex;
	height: 24px;
	margin-left: 11px;
	padding-left: 4px;
	background-color: #525252;
	border-bottom: 1px solid #222;
	font-size: 13px;
	color: #aaa;
}
.tabs button {
	margin-left: 28px;
	margin-right: 28px;
}
.tabs .current {
	margin: 2px 0 0;
	width: 96px;
	padding-left: 16px;
	background: linear-gradient(#666, #555);
	border: 1px solid #222;
	border-bottom: 0;
	border-radius: 3px 3px 0 0;
}
.tabs .state {
	margin-left: 14px;
}
.sub {
	height: 23px;
	margin-left: 11px;
	background: linear-gradient(#444, #383838);
	border-bottom: 1px solid #222;
}
.sub button {
	height: 22px;
	width: 120px;
	margin-left: 2px;
	font-size: 13px;
	background-color: #484848;
	border: 1px solid #555;
}

main {
	display: flex;
	flex: 1;
	min-height: 0;
	padding-top: 6px;
}

/* viewport strip */
.strip {
	width: 50px;
	margin-top: 11px;
	background-color: #2c2c2c;
	border-right: 2px solid #111;
	display: flex;
	flex-direction: column;
	justify-content: flex-end;
	gap: 12px;
	padding: 0 0 3px 12px;
}
.play {
	width: 25px;
	height: 25px;
	padding-left: 8px;
	border-radius: 4px;
	background-color: #4a4a4a;
}
.layout {
	height: 55px;
	margin-left: -8px;
	padding: 6px 3px 6px 4px;
	border-radius: 5px;
	background: linear-gradient(#445a80, #3f80d4);
}
.layout span {
	display: block;
	height: 34px;
	background: linear-gradient(#4a5a6a, #66717a);
	border: 1px solid #222;
}

/* layer explorer */
.explorer {
	display: flex;
	flex-direction: column;
	width: 349px;
	flex: none;
	padding: 2px 6px 2px 5px;
}
.explorer nav {
	display: flex;
	gap: 22px;
	padding: 12px 0 7px 17px;
	font-size: 14px;
}
.search, .foot {
	display: flex;
	align-items: center;
	height: 30px;
	padding-left: 4px;
}
.search input, .title {
	width: 188px;
	height: 27px;
	border: 1px solid #666;
}
.clear {
	width: 30px;
	padding-left: 8px;
}
.sq {
	display: flex;
	align-items: center;
	justify-content: center;
	width: 30px;
	height: 30px;
}
.bar {
	width: 2px;
	height: 28px;
	margin: 0 3px;
	border-left: 1px solid #888;
}
.chev {
	margin-left: auto;
	align-self: flex-start;
	padding-top: 2px;
}
.scene {
	display: flex;
	flex: 1;
	margin-top: 2px;
}
.kinds {
	display: flex;
	flex-direction: column;
	gap: 3px;
	width: 25px;
	padding-top: 4px;
}
.kinds button {
	width: 23px;
	height: 24px;
	padding: 2px;
}
.kinds svg {
	width: 20px;
	height: 20px;
	fill: #d6d6d6;
	stroke: #444;
}
.kinds hr {
	width: 19px;
	height: 2px;
	margin: 0 2px;
	border: 0;
	border-top: 1px solid #222;
	border-bottom: 1px solid #777;
}
.list {
	flex: 1;
	border: 1px solid #383838;
}
table {
	width: 100%;
	border-collapse: collapse;
	table-layout: fixed;
	font-size: 14px;
}
th {
	height: 22px;
	padding: 0 4px;
	line-height: 20px;
	text-align: left;
	font-weight: normal;
	white-space: nowrap;
	overflow: hidden;
	border: 1px solid #5c5c5c;
}
.sort::after {
	content: "";
	float: right;
	margin-top: 7px;
	border: 4px solid transparent;
	border-bottom: 6px solid #fff;
	border-top: 0;
}
.c1 {
	width: 36px;
}
.c2 {
	width: 33px;
}
.c3 {
	width: 51px;
}
td {
	padding: 0;
	height: 22px;
}
.cell {
	background-color: #4c4c4c;
	border-right: 1px solid #444;
}
.cell svg {
	margin: 0 auto;
}
.node {
	display: flex;
	align-items: center;
	gap: 3px;
	padding-left: 6px;
	height: 22px;
}
.node span {
	flex: 1;
	padding: 3px;
	background-color: #35539b;
}
.foot .tri {
	margin: 0 3px 0 4px;
}
.title {
	width: 183px;
	color: #ff0;
	padding: 0 2px;
}

/* viewport */
.viewport {
	position: relative;
	flex: 1;
	min-width: 0;
	border: 2px solid #7d6522;
	background-color: #353535;
}
.canvas {
	width: 100%;
	height: 100%;
	font-size: 14px;
	shape-rendering: crispEdges;
}
.canvas circle {
	shape-rendering: auto;
}
.grid {
	stroke: #4b4b4b;
}
.origin {
	stroke: #000;
}
.spline {
	stroke: #fff;
}
.axis {
	fill: none;
	stroke: #ff0;
}
.compass {
	font-size: 10px;
	fill: #aaa;
	text-anchor: middle;
}
.compass .top {
	font-size: 16px;
	fill: #666;
}
.labels {
	position: absolute;
	left: 4px;
	top: 9px;
	display: flex;
	align-items: center;
	gap: 8px;
	font-size: 13px;
	font-feature-settings: normal;
	color: #ccc;
}
.labels svg {
	margin-left: 8px;
}

/* command panel */
.command {
	display: flex;
	flex-direction: column;
	width: 566px;
	flex: none;
	padding: 2px 4px 0 5px;
	min-height: 0;
}
.cmdtabs {
	display: flex;
	height: 41px;
	padding-top: 7px;
}
.cmdtabs::after {
	content: "";
	flex: 1;
	background-color: #393939;
}
.cmdtabs button {
	display: flex;
	align-items: center;
	justify-content: center;
	width: 40px;
	background-color: #393939;
	border-right: 1px solid #303030;
}
.cmdtabs .current {
	background-color: #484848;
}
.columns {
	display: flex;
	flex: 1;
	min-height: 0;
	padding: 7px 0 2px 3px;
}
.left {
	width: 276px;
	flex: none;
	display: flex;
	flex-direction: column;
}
.namerow {
	display: flex;
	gap: 6px;
	height: 24px;
	margin-bottom: 7px;
}
.namerow input {
	width: 246px;
	padding-left: 6px;
	background-color: #646464;
}
.swatch {
	width: 24px;
	background-color: #c4f6e4;
	border: 1px solid #000;
}
.tall {
	height: 24px;
	flex: none;
}
.stack {
	height: 98px;
	margin-top: 7px;
	border: 2px solid #fff;
	background-color: #434343;
}
.mod {
	display: flex;
	align-items: center;
	padding-left: 10px;
	gap: 9px;
	border-bottom: 1px solid #666;
	padding-right: 1px;
}
.mod div {
	display: flex;
	flex: 1;
	justify-content: space-between;
	padding: 1px 5px 1px 1px;
	border: 1px solid #4f7dbd;
}
.stacktools {
	display: flex;
	align-items: center;
	height: 42px;
	gap: 9px;
	padding-left: 6px;
}
.stacktools .cut {
	margin: 0 4px;
}
.splitter {
	display: flex;
	align-items: center;
	gap: 4px;
	margin: 2px 7px 6px;
	height: 5px;
}
.splitter::before, .splitter::after {
	content: "";
	flex: 1;
	border-top: 1px solid #666;
}
.splitter i {
	width: 13px;
}
.rollouts {
	flex: 1;
	padding-right: 3px;
	border-right: 8px solid #3e3e3e;
}
.rollout {
	min-height: 22px;
	margin-bottom: 5px;
	background-color: #505050;
	border-radius: 3px;
}
.rollout.open {
	height: 376px;
}
.head {
	display: flex;
	align-items: center;
	width: 100%;
	height: 22px;
	padding: 0 8px;
	font-weight: bold;
	text-align: left;
}
.head::before {
	content: "";
	margin-right: 9px;
	border: 4px solid transparent;
	border-left: 6px solid #bbb;
	border-right: 0;
}
.open > .head::before, .head.open::before {
	border: 4px solid transparent;
	border-top: 6px solid #bbb;
	border-bottom: 0;
	margin-right: 7px;
}
.head svg {
	width: 8px;
	height: 8px;
	margin-left: auto;
}
.sub-levels {
	display: flex;
	width: 84px;
	margin: 12px 0 7px 91px;
	background-color: #3b3b3b;
}
.sub-levels button {
	display: flex;
	align-items: center;
	justify-content: center;
	width: 28px;
	height: 28px;
}
.sub-levels .on {
	border-radius: 4px;
}
fieldset {
	min-width: 0;
	margin: 0;
	padding: 0;
	border: 1px solid #383838;
	border-radius: 3px;
}
legend {
	margin-left: 5px;
	padding: 0 3px;
	line-height: 16px;
}
label {
	display: flex;
	align-items: center;
	gap: 5px;
	white-space: nowrap;
}
.row {
	display: flex;
	align-items: center;
}
.rollout fieldset {
	width: 178px;
	margin-left: 42px;
}
.pair {
	gap: 14px;
	padding: 5px 0 5px 12px;
}
.pair .btn {
	width: 72px;
}
.lock {
	height: 134px;
	margin-top: 8px;
	padding: 6px 14px 0;
}
.lock .row {
	height: 24px;
}
.lock .in {
	padding-left: 8px;
	gap: 28px;
	height: 20px;
}
.lock .gap {
	justify-content: space-between;
	height: 28px;
}
.lock .spin {
	width: 56px;
}
.lock .mid {
	padding-left: 30px;
}
.mid .btn {
	width: 86px;
	height: 22px;
}
.show {
	height: 66px;
	margin-top: 6px;
}
.show .row {
	height: 23px;
	padding-left: 24px;
}
.rollout p {
	padding: 6px 44px 0 0;
	text-align: right;
}
input[type="checkbox"], input[type="radio"] {
	appearance: none;
	flex: none;
	width: 15px;
	height: 15px;
	background-color: #606060;
	border: 1px solid #494949;
}
input[type="radio"] {
	border-radius: 50%;
	width: 16px;
	height: 16px;
	border: 0;
}
input[type="radio"]:checked {
	background: radial-gradient(#e4e4e4 5px, #686868 6px);
}
input[type="checkbox"]:disabled {
	background-color: #555;
}
.btn {
	height: 20px;
	background-color: #636363;
	border-radius: 3px;
	color: #e0e0e0;
	text-align: center;
	box-shadow: 0 0 0 1px #4a4a4a;
	line-height: 16px;
}
.btn:disabled {
	background-color: #575757;
	color: #8c8c8c;
}
.spin {
	display: flex;
	align-items: center;
	width: 83px;
	height: 19px;
	background-color: #646464;
	border: 1px solid #4a4a4a;
	fill: #ddd;
}
.spin.off {
	background-color: #575757;
	fill: #999;
}
.spin input {
	flex: 1;
	min-width: 0;
	height: 100%;
	padding-left: 3px;
}
.spin svg {
	width: 8px;
	height: 14px;
	margin: 0 3px;
}

/* geometry rollout */
.geometry {
	width: 264px;
	flex: none;
	margin-left: 2px;
	overflow: hidden;
	background-color: #505050;
}
.body {
	display: flex;
	flex-direction: column;
	gap: 8px;
	padding: 9px 39px 0 40px;
}
.body > div {
	margin-left: 2px;
}
.types {
	display: grid;
	grid-template-columns: 66px 1fr;
	align-content: start;
	gap: 2px 6px;
	height: 66px;
	padding: 4px 4px 0;
}
.types label {
	height: 20px;
}
.two {
	display: grid;
	grid-template-columns: 80px 80px;
	gap: 16px;
}
.attach > div {
	display: grid;
	gap: 8px;
}
.attach label {
	margin-left: -8px;
}
.wide {
	width: 91px;
}
.refine {
	display: grid;
	grid-template-columns: 56px 1fr;
	align-content: start;
	height: 82px;
	margin: 0 2px;
	padding: 6px;
	gap: 0 5px;
}
.refine .btn {
	width: 60px;
	margin-bottom: 6px;
}
.refine .btn + label {
	margin-left: 18px;
	margin-top: 3px;
}
.refine label {
	height: 20px;
}
.weld {
	height: 84px;
	padding-left: 3px;
}
.weld.first {
	height: 92px;
	margin-top: -4px;
}
.weld > label {
	margin: 6px 0 13px 14px;
}
.weld .row {
	justify-content: space-between;
	padding-right: 1px;
}
.ops {
	display: grid;
	grid-template-columns: 80px 83px;
	gap: 8px 13px;
	padding: 2px 0 0 3px;
}
.ops > * {
	height: 20px;
}
.ops .btn:nth-child(even) {
	width: 80px;
}
.bool {
	display: flex;
	padding-left: 3px;
}
.bool .btn {
	width: 70px;
	margin-right: 10px;
}
.bool button:not(.btn) {
	height: 24px;
	padding: 0 3px;
	background-color: #3b3b3b;
}
.bool .on:not(.btn) {
	background-color: #3c568a;
	border-radius: 4px;
}
.scroll {
	width: 8px;
	margin-left: 5px;
	background-color: #383838;
}
.scroll span {
	display: block;
	height: 58%;
	background-color: #505050;
	border-radius: 3px;
}

/* time slider */
.timeline {
	border-left: 3px dotted #888;
	margin: 2px 0 0 1px;
	padding-left: 7px;
}
.slider {
	display: flex;
	gap: 2px;
	height: 30px;
	padding: 4px 0 6px 1px;
}
.slider button {
	width: 18px;
	background-color: #606060;
	border-radius: 3px;
}
.slider .frame {
	width: 154px;
}
.track {
	display: flex;
	border-top: 1px solid #111;
}
.track > button {
	width: 62px;
	padding: 0 0 18px 17px;
}
.ruler {
	flex: 1;
	display: flex;
	justify-content: space-between;
	height: 45px;
	margin-right: 62px;
	padding: 0 8px 0 7px;
	background: linear-gradient(#2a2a2a 29px, #404040 29px, #404040 30px, #262626 30px);
}
.ruler span {
	width: 1px;
	height: 13px;
	background-color: #777;
	display: flex;
	justify-content: center;
	line-height: 44px;
	font-size: 13px;
	color: #bbb;
}
.ruler .major {
	height: 16px;
}
.ruler .now {
	position: relative;
	color: #dd0;
}
.now::before {
	content: "";
	position: absolute;
	left: -4px;
	top: 1px;
	width: 10px;
	height: 28px;
	background-color: rgba(190, 180, 30, .6);
}

/* status bar */
footer {
	display: flex;
	height: 66px;
	padding-top: 5px;
	border-top: 1px solid #383838;
}
.listener {
	display: flex;
	flex-direction: column;
	gap: 1px;
	width: 124px;
	height: 58px;
	margin: 0 4px 0 3px;
}
.listener input {
	height: 29px;
	width: 100%;
	padding: 0 5px;
	border: 2px solid #fff;
	border-top-color: #777;
	background-color: #fff;
	color: #777;
	font-size: 13px;
}
.listener .pink {
	background-color: #dfc4c6;
}
.prompt {
	display: grid;
	gap: 15px;
	align-content: start;
	flex: 1;
	padding: 7px 0 0 4px;
	border-left: 2px solid #111;
}
.hint {
	font-size: 13px;
}
.coords {
	display: flex;
	flex-direction: column;
	gap: 6px;
	width: 543px;
}
.line {
	display: flex;
	align-items: center;
	height: 26px;
}
.ico {
	display: flex;
	justify-content: center;
	width: 22px;
}
.coords .ico {
	margin-right: 11px;
	width: 23px;
}
.coords .ico + label {
	margin-left: -2px;
}
.coords .spin {
	width: 86px;
	height: 22px;
	margin: 0 4px;
}
.coords .spin input {
	color: #ccc;
}
.coords .end {
	gap: 7px;
	padding-left: 239px;
}
.coords .end svg {
	margin-left: 4px;
}
.gridsize {
	white-space: nowrap;
}
.chip {
	width: 24px;
	height: 26px;
	background-color: #636363;
	border-radius: 4px;
}
.chip b {
	display: block;
	width: 16px;
	margin: 0 auto;
	background-color: #fff;
	border-radius: 50%;
	color: #444;
}
.dot {
	width: 12px;
	height: 12px;
	margin: 0 1px 0 4px;
	border-radius: 50%;
	background-color: #4fd83c;
}
.transport {
	width: 164px;
	fill: #d6d6d6;
}
.transport .line {
	gap: 6px;
	padding-left: 7px;
}
.transport .line:first-child {
	gap: 5px;
	justify-content: space-between;
	padding-right: 20px;
	padding-left: 6px;
}
.transport .spin {
	width: 86px;
	height: 21px;
	margin: 0 -4px;
}
.keys {
	display: flex;
	gap: 5px;
}
.addkey {
	width: 54px;
	height: 54px;
	padding-left: 9px;
}
.addkey svg {
	margin-top: 4px;
}
.col {
	display: grid;
	grid-template-rows: 25px 25px;
	gap: 3px;
	width: 79px;
}
.col .btn {
	height: 25px;
}
.long {
	width: 144px;
}
.long .ico {
	width: 26px;
	margin-right: 5px;
}
.long .line .btn {
	width: 111px;
}
.nav {
	display: grid;
	grid-template-columns: 28px 28px 28px 28px;
	grid-template-rows: 26px 26px;
	margin: 0 32px 0 12px;
	height: 52px;
}
.nav button {
	display: flex;
	align-items: center;
	justify-content: center;
}
.nav svg {
	width: 20px;
	height: 20px;
}
```
